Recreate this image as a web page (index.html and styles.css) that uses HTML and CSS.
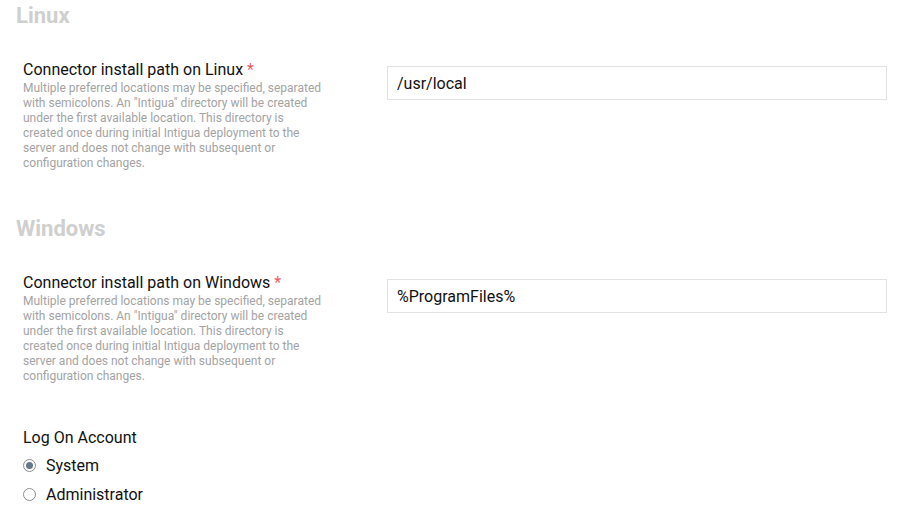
FILE: index.html
```html
<!DOCTYPE html>
<html lang="en">
<head>
    <meta charset="UTF-8">
    <meta name="viewport" content="width=device-width, initial-scale=1.0">
    <title>Connector settings</title>
    <link rel="stylesheet" href="styles.css">
</head>
<body class="page">
    <div class="section">
        <p class="os-title">Linux</p>
        <div class="field">
            <div class="field-info">
                <p class="field-label">Connector install path on Linux <span class="req">*</span></p>
                <p class="field-help">Multiple preferred locations may be specified, separated with semicolons. An "Intigua" directory will be created under the first available location. This directory is created once during initial Intigua deployment to the server and does not change with subsequent or configuration changes.</p>
            </div>
            <input class="path-input" type="text" value="/usr/local">
        </div>
    </div>

    <div class="section">
        <p class="os-title">Windows</p>
        <div class="field">
            <div class="field-info">
                <p class="field-label">Connector install path on Windows <span class="req">*</span></p>
                <p class="field-help">Multiple preferred locations may be specified, separated with semicolons. An "Intigua" directory will be created under the first available location. This directory is created once during initial Intigua deployment to the server and does not change with subsequent or configuration changes.</p>
            </div>
            <input class="path-input" type="text" value="%ProgramFiles%">
        </div>

        <div class="logon">
            <p class="field-label">Log On Account</p>
            <label class="radio-row">
                <span class="radio checked"></span>
                System
            </label>
            <label class="radio-row">
                <span class="radio"></span>
                Administrator
            </label>
        </div>
    </div>
</body>
</html>
```

FILE: styles.css
```css
.page {
    margin: 0;
    padding: 4px 11px 0 16px;
    font-family: Roboto, "Liberation Sans", Arial, sans-serif;
    color: #111;
    background: white;
}

p {
    margin: 0;
}

.section {
    margin-bottom: 46px;
}

.os-title {
    font-size: 22px;
    line-height: 24px;
    font-weight: bold;
    color: #cfcfcf;
    margin-bottom: 32px;
}

.field {
    display: flex;
    align-items: flex-start;
    padding-left: 7px;
}

.field-info {
    width: 300px;
    margin-right: 64px;
}

.field-label {
    font-size: 16px;
    line-height: 20px;
    color: #111;
}

.req {
    color: #ef5b6a;
}

.field-help {
    font-size: 12px;
    line-height: 15px;
    color: #a3a3a3;
    margin-top: 1px;
}

.path-input {
    margin-top: 6px;
    width: 500px;
    height: 34px;
    box-sizing: border-box;
    border: 1px solid #e2e2e2;
    padding: 0 9px;
    font-family: Roboto, "Liberation Sans", Arial, sans-serif;
    font-size: 16px;
    color: #111;
    outline: none;
}

.logon {
    padding-left: 7px;
    margin-top: 44px;
}

.logon .field-label {
    margin-bottom: 3px;
}

.radio-row {
    display: flex;
    align-items: center;
    gap: 10px;
    font-size: 16px;
    line-height: 20px;
    height: 29px;
    cursor: pointer;
}

.radio {
    width: 13px;
    height: 13px;
    box-sizing: border-box;
    border: 1px solid #8c8f94;
    border-radius: 50%;
    position: relative;
}

.radio.checked::after {
    content: "";
    position: absolute;
    left: 2px;
    top: 2px;
    width: 7px;
    height: 7px;
    border-radius: 50%;
    background: #67788a;
}
```
